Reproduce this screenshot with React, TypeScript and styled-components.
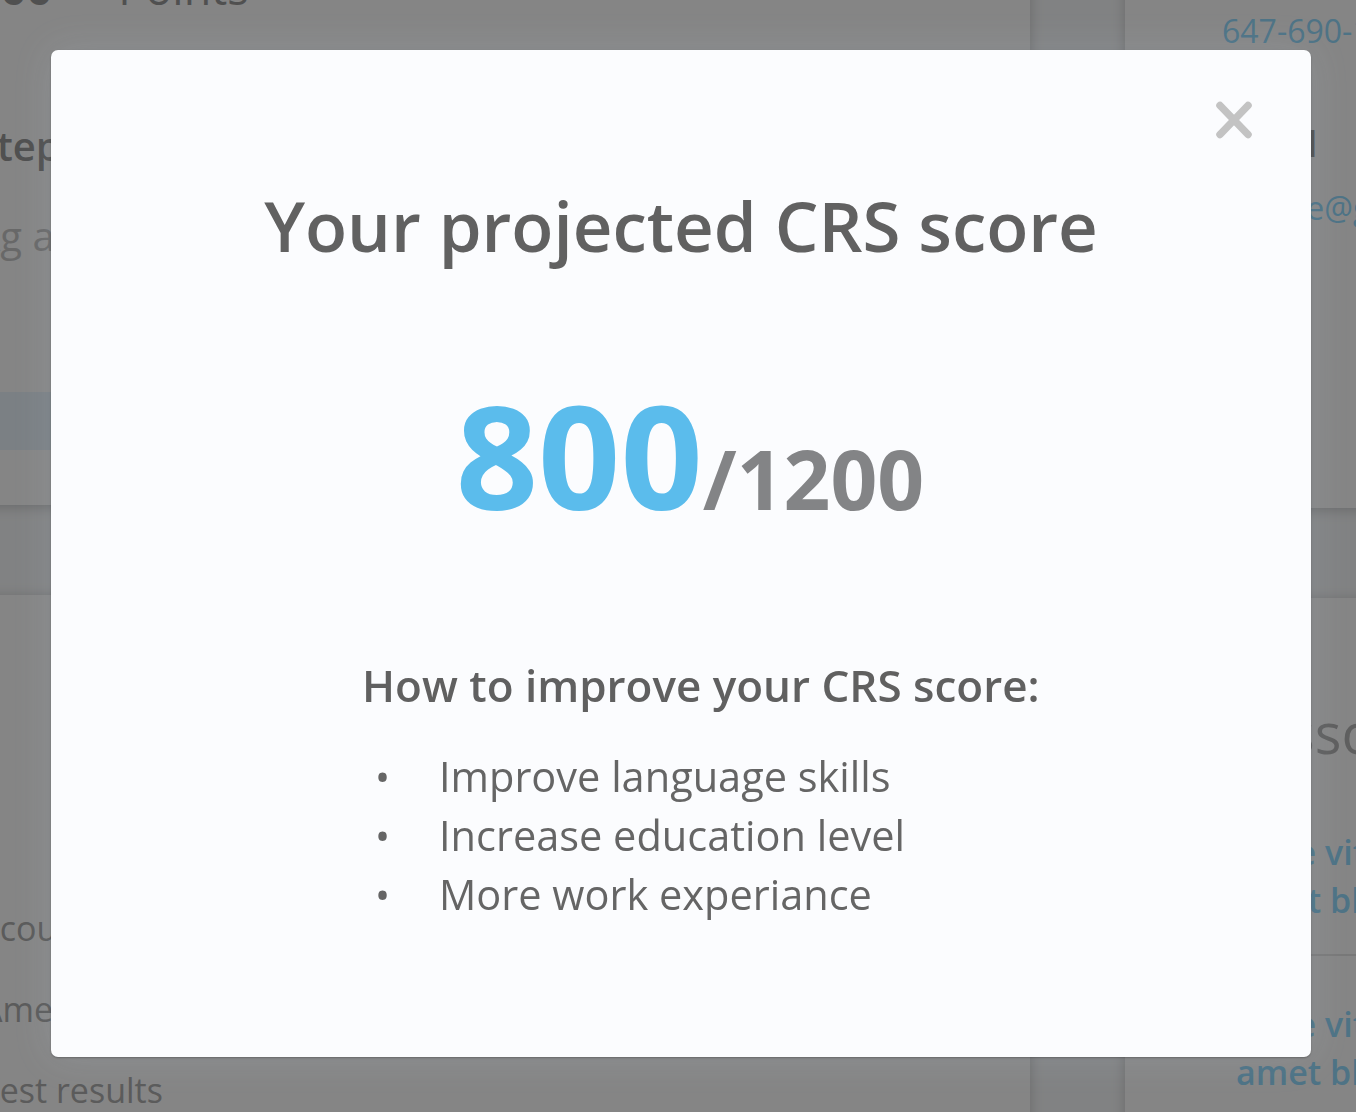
import React from "react";
import styled, { createGlobalStyle } from "styled-components";

const GlobalStyle = createGlobalStyle`
  html, body {
    margin: 0;
    padding: 0;
    overflow: hidden;
  }
  body {
    font-family: "Open Sans", "Noto Sans", Arial, sans-serif;
    background: #ffffff;
  }
  * { box-sizing: border-box; }
`;

/* ---------- background page ---------- */

const Page = styled.div`
  display: flex;
  gap: 95px;
  width: 1356px;
  height: 1112px;
  overflow: hidden;
  background: #f4f6f8;
`;

const Column = styled.div<{ $width: number; $shift?: number }>`
  flex: 0 0 ${(p) => p.$width}px;
  margin-left: ${(p) => p.$shift ?? 0}px;
  display: flex;
  flex-direction: column;
  gap: 90px;
`;

const Card = styled.section<{ $height?: number; $top?: number; $padTop: number; $padLeft: number }>`
  background: #ffffff;
  box-shadow: 0 2px 12px rgba(0, 0, 0, 0.28);
  margin-top: ${(p) => p.$top ?? 0}px;
  height: ${(p) => (p.$height ? `${p.$height}px` : "auto")};
  flex: ${(p) => (p.$height ? "0 0 auto" : "1 1 auto")};
  padding: ${(p) => p.$padTop}px 0 0 ${(p) => p.$padLeft}px;
  display: flex;
  flex-direction: column;
  white-space: nowrap;
`;

const ScoreLine = styled.div`
  display: flex;
  gap: 66px;
  font-size: 45px;
  line-height: 45px;
  color: #6e6e6e;
`;

const ScoreNum = styled.span`
  font-weight: 700;
`;

const BgHeading = styled.div<{ $mt: number; $size: number; $weight: number; $color: string }>`
  margin-top: ${(p) => p.$mt}px;
  font-size: ${(p) => p.$size}px;
  line-height: ${(p) => p.$size}px;
  font-weight: ${(p) => p.$weight};
  color: ${(p) => p.$color};
`;

const Band = styled.div`
  margin-top: 136px;
  margin-left: -40px;
  height: 58px;
  background: #e2f1fb;
`;

const BgRow = styled.div`
  height: 81px;
  line-height: 81px;
  font-size: 34px;
  color: #8a8a8a;
`;

const BgLink = styled.a<{ $mt: number; $divider?: boolean }>`
  display: block;
  margin-top: ${(p) => p.$mt}px;
  padding: 0 0 30px 14px;
  border-bottom: ${(p) => (p.$divider ? "2px solid #dcdcdc" : "none")};
  font-size: 34px;
  line-height: 48px;
  font-weight: 600;
  color: #66ccff;
  text-decoration: none;
`;

/* ---------- modal ---------- */

const Overlay = styled.div`
  position: fixed;
  inset: 0;
  background: rgba(64, 64, 64, 0.64);
  display: flex;
  align-items: flex-start;
  justify-content: flex-start;
  padding: 50px 0 0 51px;
`;

const Modal = styled.div`
  position: relative;
  width: 1260px;
  height: 1007px;
  background: #fbfcfe;
  border-radius: 7px;
  box-shadow: 0 1px 2px rgba(0, 0, 0, 0.25), 0 0 40px rgba(200, 225, 245, 0.12);
  display: flex;
  flex-direction: column;
  align-items: center;
  padding-top: 140px;
`;

const CloseButton = styled.button`
  position: absolute;
  top: 50px;
  right: 58px;
  width: 38px;
  height: 40px;
  padding: 0;
  border: none;
  background: transparent;
  cursor: pointer;
  display: flex;
`;

const Title = styled.h1`
  margin: 0;
  font-size: 69px;
  line-height: 70px;
  font-weight: 600;
  color: #616161;
`;

const Score = styled.div`
  margin-top: 122px;
  padding-left: 18px;
  font-size: 144px;
  line-height: 144px;
  font-weight: 700;
  white-space: nowrap;
`;

const ScoreValue = styled.span`
  color: #5bbcec;
`;

const ScoreMax = styled.span`
  color: #838486;
  font-size: 82px;
`;

const Tips = styled.div`
  align-self: flex-start;
  margin-top: 113px;
  padding-left: 311px;
`;

const TipsHeading = styled.h2`
  margin: 0;
  font-size: 44px;
  line-height: 44px;
  font-weight: 600;
  color: #606060;
`;

const TipList = styled.ul`
  list-style: none;
  margin: 40px 0 0;
  padding: 0 0 0 13px;
`;

const Tip = styled.li`
  display: flex;
  font-size: 41.5px;
  line-height: 59px;
  color: #656565;

  &::before {
    content: "•";
    flex: 0 0 64px;
    font-size: 40px;
    color: #656565;
  }
`;

function CloseIcon() {
  return (
    <svg width="38" height="40" viewBox="0 0 38 40">
      <g stroke="#c3c3c3" strokeWidth="7.5" strokeLinecap="round">
        <line x1="5" y1="5.5" x2="33" y2="34.5" />
        <line x1="33" y1="5.5" x2="5" y2="34.5" />
      </g>
    </svg>
  );
}

export default function App() {
  return (
    <>
      <GlobalStyle />
      <Page>
        <Column $width={1090} $shift={-60}>
          <Card $height={545} $top={-40} $padTop={5} $padLeft={35}>
            <ScoreLine>
              <ScoreNum>800</ScoreNum>
              <span>Points</span>
            </ScoreLine>
            <BgHeading $mt={116} $size={40} $weight={600} $color="#6c6c6c">
              Steps to improve your score
            </BgHeading>
            <BgHeading $mt={50} $size={40} $weight={400} $color="#b0b0b0">
              Ag according to your profile
            </BgHeading>
            <Band />
          </Card>
          <Card $padTop={293} $padLeft={41}>
            <BgRow>Scouting account</BgRow>
            <BgRow>Amendments</BgRow>
            <BgRow>Test results</BgRow>
          </Card>
        </Column>
        <Column $width={300}>
          <Card $height={548} $top={-40} $padTop={55} $padLeft={97}>
            <BgHeading $mt={0} $size={32} $weight={400} $color="#66ccff">
              647-690-1234
            </BgHeading>
            <BgHeading $mt={79} $size={36} $weight={600} $color="#6c6c6c">
              Email
            </BgHeading>
            <BgHeading $mt={30} $size={32} $weight={400} $color="#66ccff">
              joanne@gmail.com
            </BgHeading>
          </Card>
          <Card $padTop={106} $padLeft={97}>
            <BgHeading $mt={0} $size={56} $weight={400} $color="#969696">
              Ressources
            </BgHeading>
            <BgLink href="#" $mt={68} $divider>
              Sime vitae lorem
              <br />
              amet blandit
            </BgLink>
            <BgLink href="#" $mt={44}>
              Sime vitae lorem
              <br />
              amet blandit
            </BgLink>
          </Card>
        </Column>
      </Page>

      <Overlay>
        <Modal role="dialog" aria-modal="true">
          <CloseButton aria-label="Close">
            <CloseIcon />
          </CloseButton>
          <Title>Your projected CRS score</Title>
          <Score>
            <ScoreValue>800</ScoreValue>
            <ScoreMax>/1200</ScoreMax>
          </Score>
          <Tips>
            <TipsHeading>How to improve your CRS score:</TipsHeading>
            <TipList>
              <Tip>Improve language skills</Tip>
              <Tip>Increase education level</Tip>
              <Tip>More work experiance</Tip>
            </TipList>
          </Tips>
        </Modal>
      </Overlay>
    </>
  );
}
